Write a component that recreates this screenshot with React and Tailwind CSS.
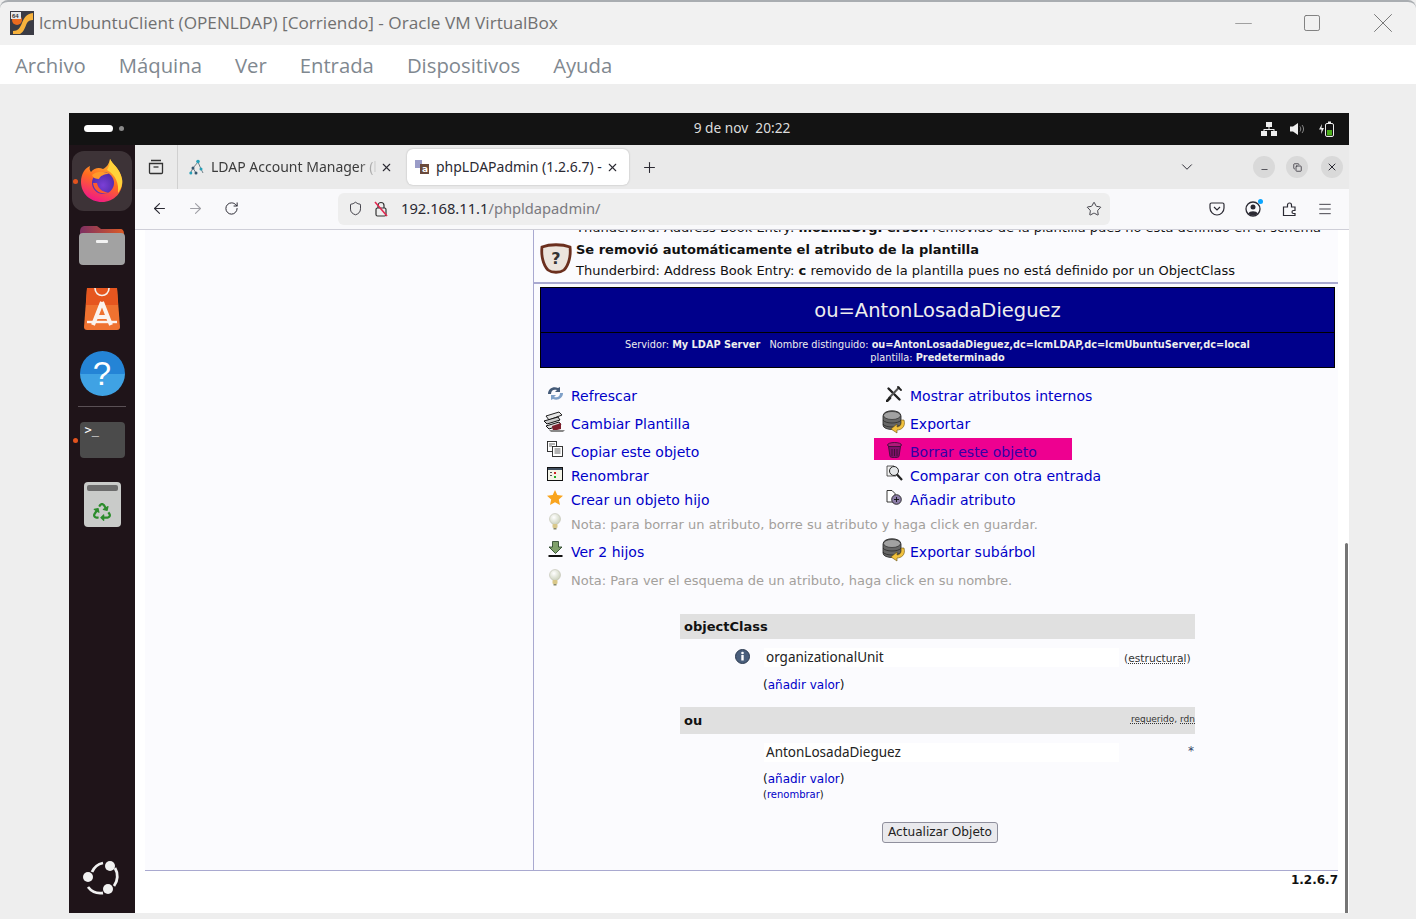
import { ArrowLeft, ArrowRight, RotateCw, Shield, Star, Plus, ChevronDown, X, Minus, Menu, Square, Copy } from "lucide-react";
import { FaRecycle } from "react-icons/fa";

const VBoxLogo = () => (
  <svg width="24" height="24" viewBox="0 0 24 24" className="shrink-0">
    <rect width="24" height="24" fill="#3a3b44" />
    <path d="M23 2 C16 3 14 7 12 12 C10 17 8 20 3 20 L3 23 L10 23 C14 21 15 16 17 12 C18 10 20 9 23 9 Z" fill="#f7b23c" />
    <circle cx="7" cy="9" r="5" fill="#ea6a1f" />
    <rect x="1" y="1" width="10" height="7" fill="#e8e8e8" />
    <text x="2" y="7" fontSize="6" fontWeight="700" fill="#333" fontFamily="Liberation Sans">64</text>
  </svg>
);

const Firefox = () => (
  <svg width="46" height="46" viewBox="0 0 46 46">
    <defs>
      <linearGradient id="ffBody" x1="0.7" y1="0" x2="0.3" y2="1">
        <stop offset="0" stopColor="#ffbd2f" />
        <stop offset="0.5" stopColor="#ff6a21" />
        <stop offset="1" stopColor="#f0148c" />
      </linearGradient>
      <radialGradient id="ffCore" cx="0.5" cy="0.6" r="0.6">
        <stop offset="0" stopColor="#7b3fd6" />
        <stop offset="1" stopColor="#4f2aa8" />
      </radialGradient>
    </defs>
    <path d="M31 1 C33 6 41 10 43 21 C45 34 35 44 23 44 C11 44 2 35 2 24 C2 16 6 10 11 8 C10 11 11 13 12 14 C15 10 20 9 24 11 C28 9 30 6 31 1 Z" fill="url(#ffBody)" />
    <path d="M31 1 C33 6 41 10 43 21 C44 26 42 31 39 35 C40 26 37 17 28 12 C30 9 31 5 31 1 Z" fill="#ffd23a" />
    <circle cx="24" cy="25" r="11" fill="url(#ffCore)" />
    <path d="M13 17 C18 13 25 13 30 16 C25 16 21 18 20 21 C17 21 14 20 13 17 Z" fill="#ff9a2a" />
    <path d="M14 25 C15 33 22 37 30 35 C24 34 19 31 18 25 Z" fill="#ff5a2c" />
  </svg>
);

const Folder = () => (
  <svg width="46" height="42" viewBox="0 0 46 42">
    <defs>
      <linearGradient id="folderTop" x1="0" y1="0" x2="1" y2="0">
        <stop offset="0" stopColor="#7d2f62" />
        <stop offset="1" stopColor="#dc5b26" />
      </linearGradient>
    </defs>
    <path d="M1 8 C1 4 3 2 6 2 L18 2 L22 5 L41 5 C44 5 45 7 45 10 L45 20 L1 20 Z" fill="url(#folderTop)" />
    <rect x="0" y="9" width="46" height="32" rx="4" fill="#a2a2a2" />
    <rect x="17" y="16" width="12" height="3" rx="1" fill="#f2f2f2" />
  </svg>
);

const Store = () => (
  <svg width="36" height="44" viewBox="0 0 36 44">
    <path d="M3 1 L33 1 L36 40 C36 42 35 43 33 43 L3 43 C1 43 0 42 0 40 Z" fill="#ef7230" />
    <path d="M3 1 L33 1 L34 18 L2 18 Z" fill="#e6561f" />
    <path d="M11 1 C11 11 25 11 25 1" fill="none" stroke="#f7f2ee" strokeWidth="1.6" />
    <path d="M18 15 L9 38 M18 15 L27 38 M11 30 L25 30" fill="none" stroke="#fbf3ee" strokeWidth="4" />
    <path d="M3 35 L33 35" stroke="#fbf3ee" strokeWidth="2.4" />
  </svg>
);

const Help = () => (
  <div className="flex h-[45px] w-[45px] items-center justify-center rounded-full bg-[linear-gradient(#2484d6_0_50%,#3fa2e4_50%)] font-['Liberation_Sans',sans-serif] text-[33px] leading-none text-white">
    ?
  </div>
);

const Terminal = () => (
  <div className="h-[36px] w-[45px] rounded-[4px] bg-[#4b4b4b] pl-[5px] pt-[1px] font-['DejaVu_Sans_Mono',monospace] text-[12px] leading-[14px] text-white">
    &gt;_
  </div>
);

const Trash = () => (
  <div className="flex h-[45px] w-[37px] flex-col items-center rounded-[4px] bg-[#c9cbc9] px-[3px] pt-[3px]">
    <div className="h-[6px] w-full rounded-[2px] bg-[#6c6c6c]" />
    <FaRecycle className="mt-[12px] text-[18px] text-[#2c8c2c]" />
  </div>
);

const UbuntuLogo = () => (
  <svg width="38" height="36" viewBox="0 0 38 36">
    <path d="M9 13 A15.500 15.500 0 0 1 20 4" fill="none" stroke="#f1f1f1" strokeWidth="2.800" />
    <path d="M32 9 A16 16 0 0 1 31 27" fill="none" stroke="#f1f1f1" strokeWidth="2.800" />
    <path d="M5 28 A16 16 0 0 0 20 34" fill="none" stroke="#f1f1f1" strokeWidth="2.800" />
    <circle cx="27" cy="7" r="5" fill="#f1f1f1" />
    <circle cx="5" cy="18" r="5" fill="#f1f1f1" />
    <circle cx="25" cy="30" r="5" fill="#f1f1f1" />
  </svg>
);

const DockItem = ({ active, running, children }) => (
  <div className="relative flex h-[64px] w-full items-center justify-center">
    {active && <div className="absolute left-[3px] top-[2px] h-[60px] w-[60px] rounded-xl bg-[#3d3337]" />}
    {running && <div className="absolute left-[4px] top-[30px] h-[5px] w-[5px] rounded-full bg-[#e2531e]" />}
    <div className="relative flex items-center justify-center">{children}</div>
  </div>
);

const Dock = () => (
  <div className="flex h-full w-[66px] shrink-0 flex-col items-center bg-[#1f1419] pt-[4px]">
    <DockItem active running><Firefox /></DockItem>
    <DockItem><Folder /></DockItem>
    <DockItem><Store /></DockItem>
    <DockItem><Help /></DockItem>
    <div className="my-[1px] h-px w-[48px] bg-[#5a5055]" />
    <DockItem running><Terminal /></DockItem>
    <DockItem><Trash /></DockItem>
    <div className="mt-auto pb-[18px]"><UbuntuLogo /></div>
  </div>
);

const TopBar = () => (
  <div className="relative flex h-[32px] shrink-0 items-center justify-center bg-[#131313] pb-[2px] pl-[66px] font-['Noto_Sans',sans-serif] text-[13.700px] text-[#dddddd]">
    <div className="absolute left-[15px] top-[12px] flex items-center gap-[6px]">
      <div className="h-[7px] w-[29px] rounded-full bg-white" />
      <div className="h-[5px] w-[5px] rounded-full bg-[#8a8a8a]" />
    </div>
    <span className="whitespace-pre">9 de nov  20:22</span>
    <div className="absolute right-[15px] top-[8px] flex items-center gap-[13px]">
      <svg width="16" height="14" viewBox="0 0 16 14" fill="#eee">
        <rect x="5" y="0" width="6" height="5" />
        <rect x="0" y="9" width="6" height="5" />
        <rect x="10" y="9" width="6" height="5" />
        <path d="M7.5 5h1v2h5v2h-1V8H3.5v1h-1V7h5z" />
      </svg>
      <svg width="15" height="14" viewBox="0 0 15 14">
        <path d="M0 4.5h3L8 1v12L3 9.500H0z" fill="#eee" />
        <path d="M10 4.500C11 6 11 8 10 9.500M12 3c2 2.500 2 5.500 0 8" fill="none" stroke="#888" strokeWidth="1" />
      </svg>
      <svg width="16" height="16" viewBox="0 0 16 16">
        <path d="M4 3 L1 8.500 L3.500 8.500 L3 13 L6 7 L3.500 7 Z" fill="#eee" />
        <rect x="7.500" y="2.500" width="8" height="13" rx="1.500" fill="none" stroke="#eee" />
        <rect x="10" y="0.500" width="3" height="2" fill="#eee" />
        <rect x="9" y="9" width="5" height="5.500" fill="#4caf1a" />
      </svg>
    </div>
  </div>
);

const LdapTreeIcon = () => (
  <svg width="16" height="16" viewBox="0 0 16 16" className="shrink-0">
    <path d="M9 3 L4 9 L1.500 14 M9 3 L12 10 M4 9 L7 14 M12 10 L14 14" fill="none" stroke="#6f7f88" strokeWidth="1" />
    <circle cx="9" cy="2.500" r="1.800" fill="#27a0b8" />
    <circle cx="4" cy="9" r="1.500" fill="#35566e" />
    <circle cx="12" cy="10" r="1.500" fill="#27a0b8" />
    <circle cx="1.800" cy="14" r="1.500" fill="#27a0b8" />
    <circle cx="7" cy="14" r="1.500" fill="#35566e" />
  </svg>
);

const PlaIcon = () => (
  <svg width="14" height="14" viewBox="0 0 14 14" className="shrink-0">
    <rect x="0" y="0" width="7" height="8" fill="#9a9cc8" />
    <rect x="5" y="4" width="9" height="10" fill="#6a4a3c" />
    <text x="7" y="12" fontSize="9" fill="#fff" fontWeight="700" fontFamily="DejaVu Sans">a</text>
  </svg>
);

const TabBar = () => (
  <div className="flex h-[44px] shrink-0 items-center bg-[#eaeaea] font-['Noto_Sans',sans-serif] text-[14px] text-[#2b2a33]">
    <div className="flex h-full w-[43px] items-center justify-center border-r border-[#d0d0d0]">
      <svg width="16" height="16" viewBox="0 0 16 16" fill="none" stroke="#333" strokeWidth="1.300">
        <path d="M3 1.500h10M1.500 4.500h13v9a1 1 0 0 1-1 1h-11a1 1 0 0 1-1-1z" />
        <path d="M5.500 8h5" />
      </svg>
    </div>
    <div className="flex h-[36px] w-[229px] items-center pl-[11px]">
      <LdapTreeIcon />
      <span className="ml-[6px] w-[167px] overflow-hidden whitespace-nowrap pb-[2px] text-[#3c3c3c] [mask-image:linear-gradient(to_right,black_88%,transparent)]">LDAP Account Manager (l</span>
      <X size={13} className="ml-[2px]" />
    </div>
    <div className="flex h-[36px] w-[222px] items-center rounded-md bg-white pl-[8px] shadow-[0_0_2px_rgba(0,0,0,0.25)]">
      <PlaIcon />
      <span className="ml-[7px] w-[168px] overflow-hidden whitespace-nowrap pb-[2px]">phpLDAPadmin (1.2.6.7) -</span>
      <X size={13} className="ml-[2px]" />
    </div>
    <Plus size={17} strokeWidth={1.5} className="ml-[12px]" />
    <ChevronDown size={18} strokeWidth={1.3} className="ml-[520px]" />
    <div className="ml-[57px] flex h-[22px] w-[22px] items-center justify-center rounded-full bg-[#d9d9d9]"><Minus size={9} className="mt-[5px]" /></div>
    <div className="ml-[11px] flex h-[22px] w-[22px] items-center justify-center rounded-full bg-[#d9d9d9]"><Copy size={9} /></div>
    <div className="ml-[13px] flex h-[22px] w-[22px] items-center justify-center rounded-full bg-[#d9d9d9]"><X size={12} /></div>
  </div>
);

const NavBar = () => (
  <div className="flex h-[41px] shrink-0 items-center border-b border-[#cfcfd8] bg-[#f9f9fb] pb-px text-[#2b2a33]">
    <ArrowLeft size={17} strokeWidth={1.5} className="ml-[16px]" />
    <ArrowRight size={17} strokeWidth={1.5} className="ml-[19px] text-[#a0a0a6]" />
    <RotateCw size={15} strokeWidth={1.6} className="ml-[20px]" />
    <div className="ml-[99px] flex h-[32px] w-[772px] items-center rounded-md bg-[#eeeeee] pl-[10px] font-['Noto_Sans',sans-serif] text-[14.700px]">
      <Shield size={15} strokeWidth={1.4} />
      <svg width="16" height="16" viewBox="0 0 16 16" className="ml-[10px]">
        <rect x="3" y="7" width="10" height="8" rx="1.500" fill="none" stroke="#333" strokeWidth="1.200" />
        <path d="M5 7V4.500a3 3 0 0 1 6 0V7" fill="none" stroke="#333" strokeWidth="1.200" />
        <path d="M2 1 L14 15" stroke="#e22850" strokeWidth="1.600" />
      </svg>
      <span className="ml-[12px] text-[#2b2a33]">192.168.11.1<span className="text-[#7a7a80]">/phpldapadmin/</span></span>
      <Star size={16} strokeWidth={1.3} className="ml-auto mr-[8px]" />
    </div>
    <svg width="16" height="16" viewBox="0 0 16 16" fill="none" stroke="#2b2a33" strokeWidth="1.200" className="ml-[99px]">
      <path d="M2.500 2h11A1.500 1.500 0 0 1 15 3.500V7a7 7 0 0 1-14 0V3.500A1.500 1.500 0 0 1 2.500 2z" />
      <path d="M5 6l3 3 3-3" />
    </svg>
    <div className="relative ml-[20px]">
      <svg width="16" height="16" viewBox="0 0 16 16">
        <circle cx="8" cy="8" r="7" fill="none" stroke="#2b2a33" strokeWidth="1.300" />
        <circle cx="8" cy="6" r="2.500" fill="#2b2a33" />
        <path d="M3 12.500a5.500 4 0 0 1 10 0a7 7 0 0 1-10 0z" fill="#2b2a33" />
      </svg>
      <div className="absolute -right-[2px] -top-[2px] h-[5px] w-[5px] rounded-full bg-[#0aa5ff]" />
    </div>
    <svg width="16" height="17" viewBox="0 0 16 17" fill="none" stroke="#2b2a33" strokeWidth="1.200" className="ml-[21px]">
      <path d="M6 15.500H1.500V7H5.500V5a2 2 0 0 1 4 0v2H13v3.500h-1.500a1.500 1.500 0 0 0 0 3H13v2H6z" />
    </svg>
    <Menu size={16} strokeWidth={1.3} className="ml-[19px]" />
  </div>
);

const RefreshIcon = () => (
  <svg width="17" height="15" viewBox="0 0 17 15">
    <path d="M1 8 C1 3 6 0 11 2 L13 1 L13 6 L8 6 L10 4 C7 3 4 4 4 8 Z" fill="#445a78" />
    <path d="M16 7 C16 12 11 15 6 13 L4 14 L4 9 L9 9 L7 11 C10 12 13 11 13 7 Z" fill="#7fa0c8" />
  </svg>
);

const TemplateIcon = () => (
  <svg width="24" height="22" viewBox="0 0 24 22">
    <path d="M3 5 L16 1 L19 4 L6 9 Z" fill="#e6e6e6" stroke="#222" strokeWidth="1" />
    <path d="M1 10 L15 6 L17 9 L4 13 Z" fill="#ccc" stroke="#111" strokeWidth="1" />
    <path d="M3 15 L16 11 L18 14 L6 18 Z" fill="#ddd" stroke="#111" strokeWidth="1" />
    <path d="M9 15 L18 12 L18 18 L10 20 Z" fill="#7c1f2c" />
    <path d="M6 19 L22 19 L20 21 L8 21 Z" fill="#888" />
  </svg>
);

const CopyIcon = () => (
  <svg width="16" height="16" viewBox="0 0 16 16" fill="#fff" stroke="#222" strokeWidth="0.900">
    <rect x="0.500" y="0.500" width="9" height="10" />
    <rect x="5.500" y="5.500" width="10" height="10" />
    <path d="M2 3h6M2 5h3M7.500 8h6M7.500 10h6M7.500 12h6" strokeWidth="0.700" />
  </svg>
);

const RenameIcon = () => (
  <svg width="16" height="14" viewBox="0 0 16 14">
    <rect x="0.500" y="0.500" width="15" height="13" fill="#f4f4e8" stroke="#111" />
    <rect x="1" y="1" width="14" height="2" fill="#3f4d5e" />
    <rect x="7" y="5" width="2" height="2" fill="#c22" />
    <rect x="3" y="5" width="2" height="1" fill="#555" />
    <rect x="3" y="8" width="2" height="1" fill="#555" />
    <rect x="7" y="9" width="2" height="2" fill="#2a2" />
  </svg>
);

const StarIcon = () => (
  <svg width="16" height="15" viewBox="0 0 16 15">
    <path d="M8 0 L10.300 5 L16 5.700 L11.800 9.400 L13 15 L8 12.200 L3 15 L4.200 9.400 L0 5.700 L5.700 5 Z" fill="#f9a41e" />
  </svg>
);

const BulbIcon = () => (
  <svg width="14" height="17" viewBox="0 0 14 17">
    <defs>
      <radialGradient id="bulb" cx="0.4" cy="0.35" r="0.7">
        <stop offset="0" stopColor="#ffffff" />
        <stop offset="1" stopColor="#c9cfb8" />
      </radialGradient>
    </defs>
    <circle cx="7" cy="6" r="5.500" fill="url(#bulb)" stroke="#b8b8a8" strokeWidth="0.500" />
    <rect x="4.500" y="11" width="5" height="4" rx="1" fill="#d9c88a" />
    <rect x="5.500" y="15" width="3" height="1.500" fill="#8a8a6a" />
  </svg>
);

const DownIcon = () => (
  <svg width="15" height="17" viewBox="0 0 15 17">
    <path d="M4.500 0.500 H10.500 V6 H14 L7.500 12.500 L1 6 H4.500 Z" fill="#7fa06a" stroke="#1f3a1f" strokeWidth="0.800" />
    <rect x="0.500" y="14" width="14" height="2" fill="#111" />
  </svg>
);

const ToolsIcon = () => (
  <svg width="16" height="16" viewBox="0 0 16 16" fill="none" stroke="#222" strokeLinecap="round">
    <path d="M2.500 2.500 L13.500 13.500" strokeWidth="2.400" />
    <path d="M13 1.500 L3 12" strokeWidth="2" stroke="#555" />
    <path d="M1 15 L4 12" strokeWidth="2.600" />
    <path d="M12 1 L15 4" strokeWidth="1.800" />
  </svg>
);

const ExportIcon = () => (
  <svg width="24" height="24" viewBox="0 0 24 24">
    <path d="M1 6 C1 -1 19 -1 19 6 L19 15 C19 21 1 21 1 15 Z" fill="#666" stroke="#222" strokeWidth="0.800" />
    <ellipse cx="10" cy="5.500" rx="8.500" ry="4" fill="#a2a2a2" stroke="#222" strokeWidth="0.600" />
    <path d="M1 10 C3 14 17 14 19 10 M1 14 C3 18 17 18 19 14" fill="none" stroke="#222" strokeWidth="0.700" />
    <path d="M22 10 C24 17 19 20 15 20 L15 23 L9 19 L15 14 L15 17 C18 17 20 14 19 10 Z" fill="#f2c23e" stroke="#6a5310" strokeWidth="0.600" />
  </svg>
);

const TrashIcon = () => (
  <svg width="15" height="16" viewBox="0 0 15 16">
    <ellipse cx="7.500" cy="3" rx="7" ry="2.500" fill="#b01a7a" stroke="#301030" strokeWidth="0.800" />
    <path d="M1.500 4.500 L3 14.500 C4 16 11 16 12 14.500 L13.500 4.500 Z" fill="#80106a" stroke="#301030" strokeWidth="0.800" />
    <path d="M5 7v7M7.500 7v7M10 7v7" stroke="#30102a" strokeWidth="0.800" />
  </svg>
);

const CompareIcon = () => (
  <svg width="17" height="17" viewBox="0 0 17 17">
    <path d="M1 1 H8 L10 3 V11 H1 Z" fill="#f2f2f2" stroke="#333" strokeWidth="0.800" />
    <circle cx="8" cy="6" r="4.500" fill="#e4e6e8" stroke="#222" strokeWidth="1" />
    <path d="M11 9.500 L16 15" stroke="#222" strokeWidth="2.200" />
  </svg>
);

const AddAttrIcon = () => (
  <svg width="16" height="15" viewBox="0 0 16 15">
    <path d="M1 0.500 H6 L9 3.500 V12 H1 Z" fill="#fff" stroke="#222" strokeWidth="0.900" />
    <circle cx="10.500" cy="9.500" r="4.800" fill="#8d7ea8" stroke="#222" strokeWidth="0.900" />
    <path d="M8 9.500h5M10.500 7v5" stroke="#111" strokeWidth="0.900" />
  </svg>
);

const Action = ({ icon, label, left }) => (
  <div className={`flex h-full items-center ${left ? "pl-[1px]" : ""}`}>
    <div className="flex w-[30px] shrink-0 justify-center pb-[5px] pr-[2px]">{icon}</div>
    <span className="text-[#0000c8]">{label}</span>
  </div>
);

const Note = ({ children, height }) => (
  <div className={`flex items-center pl-[1px] ${height}`}>
    <div className="flex w-[30px] shrink-0 justify-center pb-[5px] pr-[2px]"><BulbIcon /></div>
    <span className="pt-[2px] text-[13px] text-[#a3a09c]">{children}</span>
  </div>
);

const Actions = () => (
  <div className="mt-[14px] pl-[6px] text-[14px] leading-[16px]">
    <div className="grid h-[28px] grid-cols-[340px_1fr] grid-rows-[28px]">
      <Action left icon={<RefreshIcon />} label="Refrescar" />
      <Action icon={<ToolsIcon />} label="Mostrar atributos internos" />
    </div>
    <div className="grid h-[28px] grid-cols-[340px_1fr] grid-rows-[28px]">
      <Action left icon={<TemplateIcon />} label="Cambiar Plantilla" />
      <Action icon={<ExportIcon />} label="Exportar" />
    </div>
    <div className="grid h-[26px] grid-cols-[340px_1fr]">
      <div className="pt-[1px]"><Action left icon={<CopyIcon />} label="Copiar este objeto" /></div>
      <div className="-ml-[6px] flex h-[22px] w-[198px] items-center bg-[#ee0090] pl-[6px] pt-[6px]">
        <div className="flex w-[30px] shrink-0 justify-center pb-[5px] pr-[2px]"><TrashIcon /></div>
        <span className="text-[#3300a8]">Borrar este objeto</span>
      </div>
    </div>
    <div className="grid h-[24px] grid-cols-[340px_1fr] grid-rows-[24px]">
      <Action left icon={<RenameIcon />} label="Renombrar" />
      <Action icon={<CompareIcon />} label="Comparar con otra entrada" />
    </div>
    <div className="grid h-[24px] grid-cols-[340px_1fr] grid-rows-[24px]">
      <Action left icon={<StarIcon />} label="Crear un objeto hijo" />
      <Action icon={<AddAttrIcon />} label="Añadir atributo" />
    </div>
    <Note height="h-[24px]">Nota: para borrar un atributo, borre su atributo y haga click en guardar.</Note>
    <div className="grid h-[32px] grid-cols-[340px_1fr] grid-rows-[32px]">
      <Action left icon={<DownIcon />} label="Ver 2 hijos" />
      <Action icon={<ExportIcon />} label="Exportar subárbol" />
    </div>
    <Note height="h-[24px]">Nota: Para ver el esquema de un atributo, haga click en su nombre.</Note>
  </div>
);

const AttrHeader = ({ name, height, children }) => (
  <div className={`flex items-center justify-between bg-[#e0e0e0] pl-[4px] text-[13px] font-bold text-[#111] ${height}`}>
    <span>{name}</span>
    {children}
  </div>
);

const ValueInput = ({ value }) => (
  <div className="flex h-[19px] w-[355px] items-center bg-white pl-[2px] font-['Noto_Sans',sans-serif] text-[13.500px] text-[#222]">{value}</div>
);

const AttrTable = () => (
  <div className="ml-[146px] mt-[22px] w-[515px]">
    <AttrHeader name="objectClass" height="h-[25px]" />
    <div className="h-[68px] pt-[9px]">
      <div className="flex items-center">
        <svg width="15" height="15" viewBox="0 0 15 15" className="ml-[55px] mr-[14px] -mt-[3px]">
          <circle cx="7.500" cy="7.500" r="7" fill="#4a5f7c" stroke="#2c3a50" />
          <circle cx="7.500" cy="4" r="1.300" fill="#fff" />
          <rect x="6.300" y="6" width="2.400" height="5.500" fill="#fff" />
        </svg>
        <ValueInput value="organizationalUnit" />
        <span className="ml-[5px] pt-[3px] text-[10.700px] text-[#333]">
          (<span className="underline decoration-dotted">estructural</span>)
        </span>
      </div>
      <div className="ml-[83px] mt-[9px] text-[12px] text-[#111]">
        (<span className="text-[#0000c8]">añadir valor</span>)
      </div>
    </div>
    <AttrHeader name="ou" height="h-[27px]">
      <span className="-mt-[2px] text-[9px] font-normal text-[#333]">
        <span className="underline decoration-dotted">requerido</span>, <span className="underline decoration-dotted">rdn</span>
      </span>
    </AttrHeader>
    <div className="h-[88px] pt-[9px]">
      <div className="flex">
        <div className="ml-[84px]"><ValueInput value="AntonLosadaDieguez" /></div>
        <span className="ml-auto pr-[1px] pt-[1px] text-[12px] leading-[14px] text-[#334466]">*</span>
      </div>
      <div className="ml-[83px] mt-[9px] text-[12px] leading-[16px] text-[#111]">
        (<span className="text-[#0000c8]">añadir valor</span>)
      </div>
      <div className="ml-[83px] pt-[1px] text-[10px] leading-[14px] text-[#111]">
        (<span className="text-[#0000c8]">renombrar</span>)
      </div>
    </div>
    <div className="flex justify-center pl-[5px]">
      <div className="flex h-[21px] w-[116px] items-center justify-center rounded-[3px] border border-[#8f8f9d] bg-[#e9e9ed] text-[12.100px] text-[#222]">
        Actualizar Objeto
      </div>
    </div>
  </div>
);

const Content = () => (
  <div className="relative flex min-h-0 flex-1 flex-col bg-white font-['DejaVu_Sans',sans-serif]">
    <div className="flex h-[641px] shrink-0 pl-[10px]">
      <div className="w-[389px] border-b border-r border-[#a9a9d0] bg-[#fbfbfe]" />
      <div className="w-[804px] overflow-hidden border-b border-[#a9a9d0] bg-[#fbfbfe]">
        <div className="flex h-[6px] items-end overflow-hidden pl-[42px] text-[13px] leading-[16px] text-[#111]">
          <span className="whitespace-nowrap">
            Thunderbird: Address Book Entry: <b>mozillaOrgPerson</b> removido de la plantilla pues no está definido en el schema
          </span>
        </div>
        <div className="flex pl-[6px]">
          <svg width="32" height="31" viewBox="0 0 32 31" className="mt-[7px] shrink-0">
            <path d="M2 4 C10 1 22 1 30 4 C31 12 29 22 24 27 C20 30 12 30 8 27 C3 22 1 12 2 4 Z" fill="#ece4dc" stroke="#6b2f1e" strokeWidth="2.800" />
            <text x="16" y="21" textAnchor="middle" fontSize="16" fontWeight="700" fill="#333" fontFamily="DejaVu Sans">?</text>
          </svg>
          <div className="pl-[4px] pt-[3px] text-[13px] leading-[21px] text-[#111]">
            <div className="font-bold">Se removió automáticamente el atributo de la plantilla</div>
            <div className="whitespace-nowrap">Thunderbird: Address Book Entry: <b>c</b> removido de la plantilla pues no está definido por un ObjectClass</div>
          </div>
        </div>
        <div className="mt-[1px] h-[2px] bg-[#a9a9d0]" />
        <div className="ml-[6px] mt-[3px] w-[795px] border border-black bg-[#00008b] text-center text-[#eeeeee]">
          <div className="flex h-[44px] items-center justify-center pt-[1px] text-[19.500px]">ou=AntonLosadaDieguez</div>
          <div className="h-px bg-black" />
          <div className="h-[34px] pt-[5px] text-[9.750px] leading-[13px]">
            <div>
              Servidor: <b>My LDAP Server</b>&nbsp;&nbsp; Nombre distinguido: <b>ou=AntonLosadaDieguez,dc=lcmLDAP,dc=lcmUbuntuServer,dc=local</b>
            </div>
            <div>plantilla: <b>Predeterminado</b></div>
          </div>
        </div>
        <Actions />
        <AttrTable />
      </div>
    </div>
    <div className="w-[1203px] text-right text-[12px] font-bold leading-[18px] text-[#111]">1.2.6.7</div>
    <div className="absolute bottom-0 right-[1px] top-[313px] w-[3px] rounded-t-sm bg-[#757575]" />
  </div>
);

export default function App() {
  return (
    <div className="flex h-[919px] w-[1416px] flex-col overflow-hidden bg-[#eeeeee]">
      <div className="flex h-[45px] shrink-0 items-center rounded-t-lg border-t-2 border-[#a9adb1] bg-[#f1f1f1] pb-[1px] pl-[10px] font-['Open_Sans',sans-serif] text-[17.200px] text-[#707070]">
        <VBoxLogo />
        <span className="ml-[5px] whitespace-nowrap">lcmUbuntuClient (OPENLDAP) [Corriendo] - Oracle VM VirtualBox</span>
        <Minus size={27} strokeWidth={0.7} className="ml-auto text-[#8a8a8a]" />
        <Square size={20} strokeWidth={1.1} className="ml-[45px] text-[#777]" />
        <X size={34} strokeWidth={0.7} className="ml-[44px] mr-[16px] text-[#777]" />
      </div>
      <div className="flex h-[39px] shrink-0 items-center gap-[33px] bg-white pl-[15px] pt-[1px] font-['Open_Sans',sans-serif] text-[20.300px] text-[#808890]">
        <span>Archivo</span>
        <span>Máquina</span>
        <span>Ver</span>
        <span>Entrada</span>
        <span>Dispositivos</span>
        <span>Ayuda</span>
      </div>
      <div className="ml-[69px] mt-[29px] flex h-[800px] w-[1280px] flex-col">
        <TopBar />
        <div className="flex min-h-0 flex-1">
          <Dock />
          <div className="flex min-w-0 flex-1 flex-col">
            <TabBar />
            <NavBar />
            <Content />
          </div>
        </div>
      </div>
    </div>
  );
}
